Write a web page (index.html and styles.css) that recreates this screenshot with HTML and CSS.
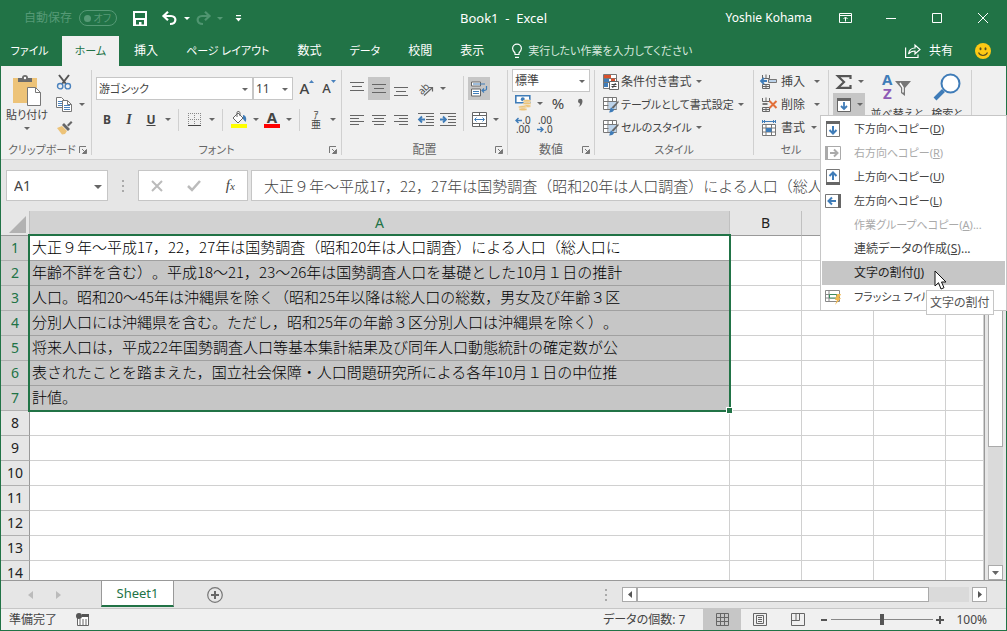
FILE: index.html
```html
<!DOCTYPE html>
<html lang="ja">
<head>
<meta charset="utf-8">
<title>Book1 - Excel</title>
<link rel="stylesheet" href="styles.css">
</head>
<body>
<svg class="defs" aria-hidden="true">
  <defs>
    <symbol id="i-launch" viewBox="0 0 9 9"><path d="M.5 7V.5H7" fill="none" stroke="#777"/><path d="M3 3l3 3M7.500 3.500v4h-4z" stroke="#777" fill="#777"/></symbol>
    <symbol id="i-grid" viewBox="0 0 16 16"><path d="M.5.5h13v12H.5zM.5 4.500h13M.5 8.500h13M5 .5v12M9.500.5v12" fill="#fff" stroke="#777"/><path d="M5.500 5h8v7h-8z" fill="#bcd3ea"/><path d="M15.500 3.500v2l-5 6-2-1z" fill="#666"/><path d="M8 10.500l3 2c0 2-2 3-5 3 1-1 .5-3 2-5z" fill="#3f7cb8"/></symbol>
    <symbol id="i-rows" viewBox="0 0 17 16"><path d="M1.500 1v3.500h7V1M5 .5v4M1.500 10.500h7v4h-7zM5 10.500v4M1.500 12.500h7" fill="none" stroke="#666"/></symbol>
  </defs>
</svg>
<div class="app">
  <header class="titlebar">
    <div class="quick">
      <span class="autosave" id="as">自動保存</span>
      <button class="toggle" aria-labelledby="as" disabled><i></i><span>オフ</span></button>
      <button class="tool save" aria-label="上書き保存"><svg width="14" height="15" viewBox="0 0 14 15"><path d="M0 0h14v15H0z" fill="#fff"/><path d="M2 2h10v5H2zM3 9h8v4.500H8.500V11H6v2.500H3z" fill="#217346"/></svg></button>
      <button class="tool undo" aria-label="元に戻す"><svg width="16" height="14" viewBox="0 0 16 14"><path d="M2 5h7c6 0 6 8-1 8" fill="none" stroke="#fff" stroke-width="2.200"/><path d="M6 .8L1.500 5 6 9.200" fill="none" stroke="#fff" stroke-width="2.200"/></svg></button>
      <i class="arrow light"></i>
      <button class="tool redo" aria-label="やり直し" disabled><svg width="16" height="14" viewBox="0 0 16 14"><path d="M14 5H7C1 5 1 13 8 13M10 .8L14.500 5 10 9.200" fill="none" stroke="#4f9570" stroke-width="2.200"/></svg></button>
      <i class="arrow faint"></i>
      <button class="tool custom" aria-label="クイック アクセス ツール バーのユーザー設定"><svg width="7" height="7" viewBox="0 0 7 7"><path d="M1 0h5v1.200H1zM.5 3h6L3.500 6.500z" fill="#fff"/></svg></button>
    </div>
    <h1>Book1&nbsp; -&nbsp; Excel</h1>
    <div class="window">
      <span class="user">Yoshie Kohama</span>
      <button class="win" aria-label="リボンの表示オプション"><svg width="13" height="10" viewBox="0 0 13 10"><path d="M.5.5h12v9H.5zM.5 2.500h12M6.500 8.500v-4M4.500 6l2-2 2 2" fill="none" stroke="#fff"/></svg></button>
      <button class="win" aria-label="最小化"><svg width="10" height="10"><path d="M0 5.500h10" stroke="#fff"/></svg></button>
      <button class="win" aria-label="最大化"><svg width="10" height="10"><path d="M.5.5h9v9h-9z" fill="none" stroke="#fff"/></svg></button>
      <button class="win" aria-label="閉じる"><svg width="10" height="10"><path d="M0 0l10 10M10 0L0 10" stroke="#fff"/></svg></button>
    </div>
  </header>

  <nav class="tabs">
    <button class="tab kana file">ファイル</button>
    <button class="tab kana active">ホーム</button>
    <button class="tab">挿入</button>
    <button class="tab kana">ページ レイアウト</button>
    <button class="tab">数式</button>
    <button class="tab kana">データ</button>
    <button class="tab">校閲</button>
    <button class="tab">表示</button>
    <button class="tell kana"><svg width="10" height="14" viewBox="0 0 10 14"><path d="M3 10.500V9C1.500 7.500.6 6.500.6 4.600a4.400 4.400 0 018.800 0C9.400 6.500 8.500 7.500 7 9v1.500zM3 13.300h4" fill="none" stroke="#fff" stroke-width="1.200"/></svg>実行したい作業を入力してください</button>
    <button class="share"><svg width="16" height="14" viewBox="0 0 16 14"><path d="M.6 3.500v10H13v-3M3.500 10C4 6.500 6.500 4 10 4V1l5 4.500-5 4.500V7C7 7 5 8 3.500 10z" fill="none" stroke="#fff" stroke-width="1.200"/></svg>共有</button>
    <button class="smile" aria-label="フィードバック"><svg width="16" height="16" viewBox="0 0 16 16"><circle cx="8" cy="8" r="8" fill="#fdc914"/><ellipse cx="5.500" cy="5.800" rx="1" ry="1.500" fill="#554c20"/><ellipse cx="10.500" cy="5.800" rx="1" ry="1.500" fill="#554c20"/><path d="M3.500 9.500c2 4 7 4 9 0" fill="none" stroke="#554c20" stroke-width="1.200"/></svg></button>
  </nav>

  <section class="ribbon">
    <div class="group g-clip">
      <div class="body">
        <button class="big paste"><svg width="28" height="31" viewBox="0 0 28 31"><path d="M0 3h24v25H0z" fill="#edc378"/><path d="M5 7V3h4a3 3 0 016 0h4v4z" fill="#6b6b6b"/><circle cx="12" cy="3" r="1.200" fill="#fff"/><path d="M14.500 12.500h8l5 5v13h-13z" fill="#fff" stroke="#777"/><path d="M22.500 12.500v5h5" fill="none" stroke="#777"/></svg><span class="kana">貼り付け</span><i class="arrow"></i></button>
        <div class="stack">
          <button class="tool" aria-label="切り取り"><svg width="16" height="16" viewBox="0 0 16 16"><path d="M3 1l7 9M13 1L6 10" stroke="#555" stroke-width="2"/><circle cx="4.200" cy="12.200" r="2.700" fill="none" stroke="#4a82bd" stroke-width="1.400"/><circle cx="11.800" cy="12.200" r="2.700" fill="none" stroke="#4a82bd" stroke-width="1.400"/></svg></button>
          <button class="tool copy" aria-label="コピー"><svg width="16" height="15" viewBox="0 0 16 15"><path d="M.5.5h5l3 3v7h-8z" fill="#fff" stroke="#777"/><path d="M2 4.500h4M2 6.500h4M2 8.500h4" stroke="#4a82bd"/><path d="M6.500 3.500h5l4 4v7h-9z" fill="#fff" stroke="#777"/><path d="M11.500 3.500v4h4" fill="none" stroke="#777"/><path d="M8 8.500h6M8 10.500h6M8 12.500h6" stroke="#4a82bd"/></svg><i class="arrow"></i></button>
          <button class="tool" aria-label="書式のコピー/貼り付け"><svg width="17" height="15" viewBox="0 0 17 15"><path d="M1 8l5-2 5 5-2 3-3 .5z" fill="#edc378"/><path d="M6 5l2-2 6 6-2 2zM11 5l4-4 1.500 1.500-4 4z" fill="#666"/></svg></button>
        </div>
      </div>
      <footer><span class="kana">クリップボード</span><button class="launch" aria-label="クリップボードの設定"><svg width="9" height="9"><use href="#i-launch"/></svg></button></footer>
    </div>

    <div class="group g-font">
      <div class="body col">
        <div class="row fields">
          <div class="combo family"><select class="kana" aria-label="フォント"><option>游ゴシック</option></select></div>
          <div class="combo size"><select aria-label="フォント サイズ"><option>11</option></select></div>
          <button class="tool grow" aria-label="フォント サイズの拡大"><b class="up">A</b><svg width="5" height="3"><path d="M0 3L2.500 0 5 3z" fill="#4a82bd"/></svg></button>
          <button class="tool shrink" aria-label="フォント サイズの縮小"><b>A</b><svg width="5" height="3"><path d="M0 0h5L2.500 3z" fill="#4a82bd"/></svg></button>
        </div>
        <div class="row">
          <button class="tool"><b>B</b></button><button class="tool"><b class="italic">I</b></button><button class="tool"><b class="under">U</b></button><i class="arrow"></i>
          <i class="sep"></i>
          <button class="tool" aria-label="罫線"><svg width="14" height="14" viewBox="0 0 14 14"><path d="M.5 0v12M6.500 0v12M12.500 0v12M0 .5h13M0 6.500h13" stroke="#888" stroke-dasharray="1 1"/><path d="M0 12.500h13" stroke="#444"/></svg></button><i class="arrow"></i>
          <i class="sep"></i>
          <button class="tool" aria-label="塗りつぶしの色"><svg width="17" height="17" viewBox="0 0 17 17"><path d="M7 2l5 5-5 5-5-5z" fill="#fff" stroke="#666"/><path d="M6 6V1.500C6 0 9 0 9 2v3" fill="none" stroke="#666"/><path d="M12 4c3 0 4 4 2.500 7L12 8z" fill="#3f7cb8"/><path d="M0 13h16v4H0z" fill="#ff0"/></svg></button><i class="arrow"></i>
          <button class="tool color" aria-label="フォントの色"><b>A</b><i></i></button><i class="arrow"></i>
          <i class="sep"></i>
          <button class="tool ruby" aria-label="ふりがなの表示/非表示"><span>ｱ</span><span>亜</span></button><i class="arrow"></i>
        </div>
      </div>
      <footer><span class="kana">フォント</span><button class="launch" aria-label="フォントの設定"><svg width="9" height="9"><use href="#i-launch"/></svg></button></footer>
    </div>

    <div class="group g-align">
      <div class="body">
        <div class="col block">
          <div class="row">
            <button class="tool top" aria-label="上揃え"><svg width="14" height="14"><path d="M0 .5h14M2 4.500h10M0 8.500h14" stroke="#666"/></svg></button><button class="tool on" aria-label="上下中央揃え"><svg width="14" height="14"><path d="M0 2.500h14M2 6.500h10M0 10.500h14" stroke="#666"/></svg></button><button class="tool" aria-label="下揃え"><svg width="14" height="14"><path d="M0 5.500h14M2 9.500h10M0 13.500h14" stroke="#666"/></svg></button>
            <button class="tool gap" aria-label="方向"><svg width="18" height="16" viewBox="0 0 18 16"><text class="ab" x="1" y="11" transform="rotate(-45 7 8)">ab</text><path d="M7 14.500L15 7M11.500 6.500h4v4" fill="none" stroke="#666" stroke-width="1.200"/></svg></button><i class="arrow"></i>
          </div>
          <div class="row">
            <button class="tool" aria-label="左揃え"><svg width="14" height="12"><path d="M0 1.500h14M0 4.500h9M0 7.500h14M0 10.500h9" stroke="#666"/></svg></button><button class="tool" aria-label="中央揃え"><svg width="14" height="12"><path d="M0 1.500h14M2 4.500h10M0 7.500h14M2 10.500h10" stroke="#666"/></svg></button><button class="tool" aria-label="右揃え"><svg width="14" height="12"><path d="M0 1.500h14M5 4.500h9M0 7.500h14M5 10.500h9" stroke="#666"/></svg></button>
            <button class="tool gap" aria-label="インデントを減らす"><svg width="16" height="14"><path d="M0 .5h16M8 3.500h8M8 6.500h8M8 9.500h8M0 12.500h16" stroke="#666"/><path d="M1 6.500h6M4 3.500l-3 3 3 3" fill="none" stroke="#3f7cb8" stroke-width="1.800"/></svg></button><button class="tool" aria-label="インデントを増やす"><svg width="16" height="14"><path d="M0 .5h16M8 3.500h8M8 6.500h8M8 9.500h8M0 12.500h16" stroke="#666"/><path d="M0 6.500h6M3 3.500l3 3-3 3" fill="none" stroke="#3f7cb8" stroke-width="1.800"/></svg></button>
          </div>
        </div>
        <i class="sep tall"></i>
        <div class="col">
          <div class="row"><button class="tool on" aria-label="折り返して全体を表示する"><svg width="16" height="16" viewBox="0 0 16 16"><path d="M.5 1h9v4h-9zM.5 8h9v7h-9z" fill="#fff" stroke="#666"/><path d="M2 3h12M2 10.500h6M2 12.500h6M15.500 5v3c0 1-1 1.500-4 1.500M13 7.500l-2 2 2 2" fill="none" stroke="#3f7cb8" stroke-width="1.200"/></svg></button></div>
          <div class="row"><button class="tool" aria-label="セルを結合して中央揃え"><svg width="15" height="15" viewBox="0 0 15 15"><path d="M.5.5h14v14H.5zM.5 3.500h14M.5 11.500h14M7.500.5v3M7.500 11.500v3" fill="#fff" stroke="#666"/><path d="M3 7.500h9M4.500 5.500l-2 2 2 2M10.500 5.500l2 2-2 2" fill="none" stroke="#3f7cb8"/></svg></button><i class="arrow"></i></div>
        </div>
      </div>
      <footer><span>配置</span><button class="launch" aria-label="配置の設定"><svg width="9" height="9"><use href="#i-launch"/></svg></button></footer>
    </div>

    <div class="group g-num">
      <div class="body col tight">
        <div class="combo"><select aria-label="数値の書式"><option>標準</option></select></div>
        <div class="row">
          <button class="tool" aria-label="通貨表示形式"><svg width="17" height="16" viewBox="0 0 17 16"><path d="M.8.800h14v7H.8z" fill="#fff" stroke="#3f7cb8" stroke-width="1.600"/><circle cx="7.800" cy="4.300" r="2" fill="#3f7cb8"/><g fill="#edc378" stroke="#f0f0f0" stroke-width=".5"><ellipse cx="12" cy="6" rx="4" ry="1.500"/><ellipse cx="12" cy="8.500" rx="4" ry="1.500"/><ellipse cx="12" cy="11" rx="4" ry="1.500"/><ellipse cx="7.500" cy="12" rx="4" ry="1.500"/><ellipse cx="8" cy="14.300" rx="4" ry="1.500"/></g></svg></button><i class="arrow"></i>
          <button class="tool pct">%</button><button class="tool comma" aria-label="桁区切りスタイル"><svg width="5" height="8"><path d="M0 2a2 2 0 014.500 0c0 3-1.500 5-4 6 1-1 1.500-2 1.500-3.500C1 4.500 0 3.500 0 2z" fill="#666"/></svg></button>
        </div>
        <div class="row">
          <button class="tool dec" aria-label="小数点以下の表示桁数を増やす"><span><svg width="7" height="7"><path d="M7 3.500H1M3.500 1L1 3.500 3.500 6" fill="none" stroke="#3f7cb8" stroke-width="1.400"/></svg>.0</span><span>.00</span></button>
          <button class="tool dec" aria-label="小数点以下の表示桁数を減らす"><span>.00</span><span><svg width="7" height="7"><path d="M0 3.500h6M3.500 1L6 3.500 3.500 6" fill="none" stroke="#3f7cb8" stroke-width="1.400"/></svg>.0</span></button>
        </div>
      </div>
      <footer><span>数値</span><button class="launch" aria-label="数値の設定"><svg width="9" height="9"><use href="#i-launch"/></svg></button></footer>
    </div>

    <div class="group g-style">
      <div class="body col list">
        <button class="item"><svg width="16" height="16" viewBox="0 0 16 16"><path d="M.5.5h13v14H.5zM.5 4.500h13M.5 8.500h13" fill="#fff" stroke="#777"/><path d="M1 1h7v3H1zM8 4.500h4v3H8z" fill="#d9512c"/><path d="M1 5h5v3H1zM1 9h4v4H1z" fill="#3f7cb8"/><path d="M6.500 7.500h9v8h-9z" fill="#fff" stroke="#666"/><path d="M8.500 10.500h5M8.500 12.500h5M12.500 9l-3 5" stroke="#444"/></svg>条件付き書式<i class="arrow"></i></button>
        <button class="item kana"><svg width="16" height="16"><use href="#i-grid"/></svg>テーブルとして書式設定<i class="arrow"></i></button>
        <button class="item kana"><svg width="16" height="16"><use href="#i-grid"/></svg>セルのスタイル<i class="arrow"></i></button>
      </div>
      <footer><span class="kana">スタイル</span></footer>
    </div>

    <div class="group g-cell">
      <div class="body col list">
        <button class="item"><svg width="17" height="16" viewBox="0 0 17 16"><use href="#i-rows"/><path d="M7.500 5.500h8v3h-8z" fill="#bcd3ea" stroke="#777"/><path d="M0 7h6M3 4L0 7l3 3" fill="none" stroke="#3f7cb8" stroke-width="1.800"/></svg>挿入<i class="arrow"></i></button>
        <button class="item"><svg width="17" height="16" viewBox="0 0 17 16"><use href="#i-rows"/><path d="M1.500 7h5" stroke="#777" stroke-width="2"/><path d="M8.500 4l7 7M15.500 4l-7 7" stroke="#e2703a" stroke-width="2"/></svg>削除<i class="arrow"></i></button>
        <button class="item short"><svg width="17" height="16" viewBox="0 0 17 16"><path d="M1.500 4.500h13v11h-13zM1.500 8h13M1.500 12h13M5 4.500v11M10.500 4.500v11" fill="#fff" stroke="#777"/><path d="M5 8h5.500v4H5z" fill="#3f7cb8"/><path d="M2 1.500h12M1.500 0v3M14.500 0v3M4 0L2.500 1.500 4 3M12 0l1.500 1.500L12 3" fill="none" stroke="#3f7cb8"/></svg>書式<i class="arrow"></i></button>
      </div>
      <footer><span class="kana">セル</span></footer>
    </div>

    <div class="group g-edit">
      <div class="body">
        <div class="col list narrow">
          <button class="item sum" aria-label="オート SUM"><svg width="16" height="14" viewBox="0 0 16 14"><path d="M14.500 4V1.200H2L8 7l-6 5.800h12.500V10" fill="none" stroke="#555" stroke-width="2.200"/></svg><i class="arrow"></i></button>
          <div class="fill">
            <button class="item on" aria-label="フィル" aria-expanded="true"><svg width="14" height="14"><path d="M.5.5h13v13H.5z" fill="#fff" stroke="#666"/><path d="M0 0h14v3H0z" fill="#666"/><path d="M7 4v7M4 8l3 3 3-3" fill="none" stroke="#3f7cb8" stroke-width="1.800"/></svg><i class="arrow"></i></button>
            <div class="menu" role="menu">
              <button class="kana" role="menuitem"><svg width="14" height="16" viewBox="0 0 14 16"><path d="M.5.5h13v15H.5z" fill="#fff" stroke="#777"/><path d="M0 0h14v3H0z" fill="#666"/><path d="M7 5v8M3.500 9L7 12.500 10.500 9" fill="none" stroke="#3f7cb8" stroke-width="2"/></svg><span>下方向へコピー(<u>D</u>)</span></button>
              <button class="kana" role="menuitem" disabled><svg width="16" height="14" viewBox="0 0 16 14"><path d="M.5.5h15v13H.5z" fill="#fff" stroke="#aaa"/><path d="M0 0h3v14H0z" fill="#aaa"/><path d="M5 7h8M9 3.500L12.500 7 9 10.500" fill="none" stroke="#aaa" stroke-width="2"/></svg><span>右方向へコピー(<u>R</u>)</span></button>
              <button class="kana" role="menuitem"><svg width="14" height="16" viewBox="0 0 14 16"><path d="M.5.5h13v15H.5z" fill="#fff" stroke="#777"/><path d="M0 13h14v3H0z" fill="#666"/><path d="M7 11V3M3.500 7L7 3.500 10.500 7" fill="none" stroke="#3f7cb8" stroke-width="2"/></svg><span>上方向へコピー(<u>U</u>)</span></button>
              <button class="kana" role="menuitem"><svg width="16" height="14" viewBox="0 0 16 14"><path d="M.5.5h15v13H.5z" fill="#fff" stroke="#777"/><path d="M13 0h3v14h-3z" fill="#666"/><path d="M11 7H3M7 3.500L3.500 7 7 10.500" fill="none" stroke="#3f7cb8" stroke-width="2"/></svg><span>左方向へコピー(<u>L</u>)</span></button>
              <button class="kana" role="menuitem" disabled><span>作業グループへコピー(<u>A</u>)...</span></button>
              <button role="menuitem"><span>連続データの作成(<u>S</u>)...</span></button>
              <button role="menuitem" class="hot"><span>文字の割付(<u>J</u>)</span></button>
              <button class="kana" role="menuitem"><svg width="16" height="16" viewBox="0 0 16 16"><path d="M.5 1.500h14v11H.5zM.5 5.500h14M.5 9h14M4 1.500v11" fill="#fff" stroke="#888"/><path d="M4.500 5.500h7V9h-7z" fill="#fff" stroke="#3a8a5c"/><path d="M12 5h4l-2 4h2l-6 7 2-5h-2z" fill="#f0b850"/></svg><span>フラッシュ フィル(<u>F</u>)</span></button>
              <div class="tooltip" role="tooltip">文字の割付</div>
              <svg class="pointer" width="14" height="20" viewBox="0 0 14 20"><path d="M1 1v15l3.500-3.300L7 19l3-1.300L7.500 12H12z" fill="#fff" stroke="#111"/></svg>
            </div>
          </div>
        </div>
        <button class="big sort"><svg width="30" height="28" viewBox="0 0 30 28"><text class="az blue" x="0" y="12">A</text><text class="az violet" x="1" y="26">Z</text><path d="M13 8h16l-6 7v8l-4-3v-5z" fill="#777"/><path d="M18 10l3 4.500v5" fill="none" stroke="#fff" stroke-width="1.500"/></svg><span class="kana">並べ替えと</span></button>
        <button class="big find"><svg width="28" height="28" viewBox="0 0 28 28"><circle cx="17.500" cy="10.500" r="9" fill="#fff" stroke="#3f7cb8" stroke-width="2"/><path d="M10.500 17.500L2 26" stroke="#3f7cb8" stroke-width="4"/></svg><span class="kana">検索と</span></button>
      </div>
    </div>
  </section>

  <section class="formula">
    <div class="name combo"><input aria-label="名前ボックス" value="A1"></div>
    <i class="dots"></i>
    <div class="fx">
      <button aria-label="キャンセル" disabled><svg width="12" height="12"><path d="M1 1l10 10M11 1L1 11" stroke="#bbb" stroke-width="2"/></svg></button>
      <button aria-label="入力" disabled><svg width="14" height="12"><path d="M1 6l4 4 8-9" fill="none" stroke="#bbb" stroke-width="2.500"/></svg></button>
      <button aria-label="関数の挿入"><span class="f">f<small>x</small></span></button>
    </div>
    <input class="content" aria-label="数式バー" value="大正９年～平成17，22，27年は国勢調査（昭和20年は人口調査）による人口（総人口に">
  </section>

  <main class="sheet">
    <div class="cells">
      <table>
        <colgroup><col class="c-head"><col class="c-a"><col class="c-n"><col class="c-n"><col class="c-n"><col></colgroup>
        <thead><tr><th class="corner" aria-label="すべて選択"><svg width="17" height="17"><path d="M17 0v17H0z" fill="#b2b2b2"/></svg></th><th class="sel">A</th><th>B</th><th>C</th><th>D</th><th>E</th></tr></thead>
        <tbody>
          <tr class="sel first"><th>1</th><td>大正９年～平成17，22，27年は国勢調査（昭和20年は人口調査）による人口（総人口に<i class="range"></i></td><td></td><td></td><td></td><td></td></tr>
          <tr class="sel"><th>2</th><td>年齢不詳を含む）。平成18～21，23～26年は国勢調査人口を基礎とした10月１日の推計</td><td></td><td></td><td></td><td></td></tr>
          <tr class="sel"><th>3</th><td>人口。昭和20～45年は沖縄県を除く（昭和25年以降は総人口の総数，男女及び年齢３区</td><td></td><td></td><td></td><td></td></tr>
          <tr class="sel"><th>4</th><td>分別人口には沖縄県を含む。ただし，昭和25年の年齢３区分別人口は沖縄県を除く）。</td><td></td><td></td><td></td><td></td></tr>
          <tr class="sel"><th>5</th><td>将来人口は，平成22年国勢調査人口等基本集計結果及び同年人口動態統計の確定数が公</td><td></td><td></td><td></td><td></td></tr>
          <tr class="sel"><th>6</th><td>表されたことを踏まえた，国立社会保障・人口問題研究所による各年10月１日の中位推</td><td></td><td></td><td></td><td></td></tr>
          <tr class="sel"><th>7</th><td>計値。</td><td></td><td></td><td></td><td></td></tr>
          <tr><th>8</th><td></td><td></td><td></td><td></td><td></td></tr>
          <tr><th>9</th><td></td><td></td><td></td><td></td><td></td></tr>
          <tr><th>10</th><td></td><td></td><td></td><td></td><td></td></tr>
          <tr><th>11</th><td></td><td></td><td></td><td></td><td></td></tr>
          <tr><th>12</th><td></td><td></td><td></td><td></td><td></td></tr>
          <tr><th>13</th><td></td><td></td><td></td><td></td><td></td></tr>
          <tr><th>14</th><td></td><td></td><td></td><td></td><td></td></tr>
        </tbody>
      </table>
    </div>
    <div class="vscroll">
      <button aria-label="上へ"><svg width="7" height="4"><path d="M0 4l3.500-4L7 4z" fill="#777"/></svg></button>
      <div class="track"><i></i></div>
      <button aria-label="下へ"><svg width="7" height="4"><path d="M0 0h7L3.500 4z" fill="#666"/></svg></button>
    </div>
  </main>

  <div class="sheetbar">
    <div class="navs"><button aria-label="前のシート" disabled><svg width="5" height="8"><path d="M5 0v8L0 4z" fill="#bbb"/></svg></button><button aria-label="次のシート" disabled><svg width="5" height="8"><path d="M0 0v8l5-4z" fill="#bbb"/></svg></button></div>
    <button class="sheettab">Sheet1</button>
    <button class="add" aria-label="新しいシート"><svg width="16" height="16"><circle cx="8" cy="8" r="7.300" fill="none" stroke="#777" stroke-width="1.200"/><path d="M8 4v8M4 8h8" stroke="#666" stroke-width="2"/></svg></button>
    <i class="dots"></i>
    <div class="hscroll">
      <button aria-label="左へ"><svg width="4" height="7"><path d="M4 0v7L0 3.500z" fill="#555"/></svg></button>
      <div class="track"><i></i></div>
      <button aria-label="右へ"><svg width="4" height="7"><path d="M0 0v7l4-3.500z" fill="#555"/></svg></button>
    </div>
  </div>

  <footer class="status">
    <span>準備完了</span>
    <button class="macro" aria-label="マクロの記録"><svg width="14" height="13" viewBox="0 0 14 13"><path d="M1.500 5v7.500h11V1.500H6" fill="#fff" stroke="#666"/><path d="M6 1h7v3H6z" fill="#555"/><circle cx="3" cy="3" r="3" fill="#555"/><path d="M3 7h9M3 9h9M3 11h9" stroke="#666" stroke-dasharray="2 1"/></svg></button>
    <span class="count">データの個数: 7</span>
    <button class="view on" aria-label="標準"><svg width="13" height="13"><path d="M.5.5h12v12H.5zM.5 4.500h12M.5 8.500h12M4.500.5v12M8.500.5v12" fill="none" stroke="#666"/></svg></button>
    <button class="view" aria-label="ページ レイアウト"><svg width="14" height="13"><path d="M.5.5h13v12H.5zM3.500 2.500h7v8h-7zM5 4.500h4M5 6.500h4M5 8.500h4" fill="none" stroke="#666"/></svg></button>
    <button class="view" aria-label="改ページ プレビュー"><svg width="14" height="13"><path d="M.5.500h13v12H.5zM.5 7.500h8v-7M5 .5v7" fill="none" stroke="#666"/></svg></button>
    <button class="zoom" aria-label="縮小"><svg width="6" height="8"><path d="M0 4h6" stroke="#555" stroke-width="2"/></svg></button>
    <input class="slider" type="range" min="0" max="100" value="50" aria-label="ズーム">
    <button class="zoom" aria-label="拡大"><svg width="8" height="8"><path d="M0 4h8M4 0v8" stroke="#555" stroke-width="2"/></svg></button>
    <span class="percent">100%</span>
  </footer>
</div>
</body>
</html>
```
FILE: styles.css
```css
:root {
  --green: #217346;
  --ink: #444;
  --line: #c6c6c6;
  --pane: #f0f0f0;
  --shade: #e6e6e6;
}
*, *::before, *::after { box-sizing: border-box; }
body {
  margin: 0;
  font: 12px/16px "Noto Sans", "Noto Sans CJK JP", sans-serif;
  font-feature-settings: "palt";
  color: var(--ink);
}
button, input, select { font: inherit; font-feature-settings: inherit; color: inherit; border: 0; margin: 0; padding: 0; background: none; }
button { display: flex; align-items: center; justify-content: center; white-space: nowrap; }
svg { display: block; flex: none; overflow: visible; }
.kana { font-size: 11px; }
.defs { position: absolute; width: 0; height: 0; }
.app { display: flex; flex-direction: column; height: 100vh; border: 1px solid var(--green); border-top: 0; background: var(--shade); }

/* title bar */
.titlebar { display: grid; grid-template-columns: 1fr auto 1fr; align-items: center; height: 36px; background: var(--green); color: #fff; flex: none; }
.titlebar h1 { margin: 0; font-size: 13px; font-weight: 400; }
.quick { display: flex; align-items: center; padding-left: 23px; }
.autosave, .toggle { color: #569a76; }
.toggle { width: 38px; height: 16px; margin-left: 7px; border: 1px solid #569a76; border-radius: 8px; justify-content: space-between; padding: 0 5px 0 4px; font-size: 10px; }
.toggle i { width: 7px; height: 7px; border-radius: 50%; background: #569a76; }
.quick .save { margin: 0 8px 0 12px; }
.quick .custom { margin-left: 2px; }
.window { display: flex; align-items: center; justify-content: flex-end; }
.user { margin-right: 10px; }
.win { width: 46px; height: 32px; }

.arrow { flex: none; width: 11px; height: 3px; display: flex; justify-content: center; }
.arrow::after { content: ""; width: 0; border: 3px solid transparent; border-top-color: #666; border-bottom: 0; }
.arrow.light::after { border-top-color: #fff; }
.arrow.faint::after { border-top-color: #569a76; }
.tool { width: 22px; height: 23px; flex: none; }
.on { background: #c6c6c6; }

/* tabs */
.tabs { display: flex; height: 30px; background: var(--green); color: #fff; flex: none; }
.tab { padding: 0 14px; }
.tab.file { width: 61px; padding: 0 4px 0 0; }
.tab.active { width: 57px; padding: 0; margin-right: 1px; background: var(--pane); color: var(--green); }
.tell { gap: 6px; margin-left: 14px; color: #d8e8df; }
.share { gap: 8px; margin-left: auto; }
.smile { padding: 0 15px 0 22px; }

/* ribbon */
.ribbon { display: flex; height: 94px; padding: 4px 0; background: var(--pane); border-bottom: 1px solid #d0d0d0; flex: none; }
.group { display: flex; flex-direction: column; border-right: 1px solid #d0d0d0; }
.body { display: flex; flex: 1; min-height: 0; }
.body.col, .col { display: flex; flex-direction: column; }
.row { display: flex; align-items: center; }
.group footer { display: flex; align-items: center; height: 10px; color: #666; }
.group footer span { flex: 1; text-align: center; }
.group footer .launch { width: 15px; height: 10px; margin-left: -15px; }
.sep { width: 1px; height: 22px; margin: 0 5px; background: #d0d0d0; }
.sep.tall { height: 55px; margin: 6px 4px 0 0; }
.big { flex-direction: column; }
.g-clip { width: 91px; }
.g-clip footer span { text-align: left; padding-left: 7px; }
.g-font { width: 250px; }
.g-align { width: 166px; }
.g-num { width: 87px; }
.g-style { width: 159px; }
.g-cell { width: 75px; }
.g-edit { width: 143px; }

.paste { width: 52px; height: 64px; padding-top: 1px; }
.paste span { line-height: 18px; }
.paste .arrow { margin-top: 3px; }
.stack .copy { width: 34px; justify-content: space-between; padding-left: 3px; }

.combo { position: relative; display: flex; background: #fff; border: 1px solid var(--line); }
.combo::after { content: ""; position: absolute; right: 4px; top: calc(50% - 1px); border: 3px solid transparent; border-top-color: #666; border-bottom: 0; pointer-events: none; }
.combo select { appearance: none; width: 100%; height: 21px; padding-left: 2px; }
.g-font .body { padding: 7px 0 0 4px; gap: 8px; }
.family { width: 157px; }
.size { width: 40px; }
.grow, .shrink { align-items: flex-start; padding-top: 3px; }
.grow { margin-left: 3px; }
.grow b { font-size: 15px; font-weight: 500; }
.shrink b { font-size: 13px; font-weight: 500; }
.italic { font-style: italic; font-family: "Liberation Serif", serif; font-size: 14px; }
.under { text-decoration: underline; }
.color { flex-direction: column; }
.color b { font-size: 15px; line-height: 13px; }
.color i { width: 16px; height: 4px; background: #f00; }
.ruby { flex-direction: column; font-size: 10px; line-height: 9px; }

.g-align .body { padding-left: 4px; }
.g-align .col { padding-top: 7px; gap: 8px; }
.block { width: 117px; }
.gap { margin-left: 3px; }
.ab { font: 10px "Noto Sans", sans-serif; fill: #555; }

.g-num .body { padding: 0 4px; margin-top: -1px; }
.g-num .row { height: 22px; }
.pct { width: 26px; font-size: 15px; }
.comma { width: 18px; }
.dec { flex-direction: column; font-size: 10px; line-height: 9px; }
.dec span { display: flex; align-items: center; }

.item { gap: 3px; height: 23px; justify-content: flex-start; }
.list .item { padding-left: 7px; }
.g-style .item { gap: 2px; padding-left: 8px; }
.g-cell .item { width: 68px; }
.g-cell .item.short { width: 64px; }
.g-cell .item .arrow { margin-left: auto; }
.narrow { width: 40px; }
.narrow .sum { width: 36px; }
.fill { position: relative; width: 32px; margin-left: 4px; }
.fill .item { width: 32px; padding-left: 4px; }
.sort { width: 56px; height: 54px; }
.find { width: 44px; height: 54px; }
.big.sort, .big.find { gap: 5px; justify-content: flex-start; padding-top: 3px; }
.az { font: 700 15px "Noto Sans", sans-serif; }
.blue { fill: #3f7cb8; }
.violet { fill: #8e5bb5; }

/* fill menu */
.menu { position: absolute; z-index: 5; top: calc(100% - 1px); left: -13px; width: 187px; padding: 1px; background: #fff; border: 1px solid var(--line); }
.menu button { display: grid; grid-template-columns: 22px 1fr; column-gap: 10px; justify-items: start; width: 100%; height: 24px; text-align: left; }
.menu button svg { justify-self: center; }
.menu button span { grid-column: 2; }
.menu button:disabled { color: #aaa; }
.menu .hot { background: var(--line); color: #222; }
.tooltip { position: absolute; left: 105px; top: 174px; padding: 4px 3px 3px; background: #fff; border: 1px solid var(--line); color: #555; white-space: nowrap; }
.pointer { position: absolute; left: 113px; top: 154px; }

/* formula bar */
.formula { display: flex; align-items: center; height: 51px; padding-left: 5px; flex: none; }
.formula .name { width: 102px; height: 31px; }
.name input { width: 80px; padding-left: 7px; font-size: 14px; }
.formula .name::after { right: 5px; border-width: 4px; border-bottom: 0; }
.dots { width: 2px; height: 12px; background: repeating-linear-gradient(#aaa 0 2px, transparent 2px 5px); }
.formula .dots { margin: 0 14px; }
.fx { display: flex; justify-content: space-around; width: 110px; height: 31px; background: #fff; border: 1px solid var(--line); }
.f { font: italic 15px "Liberation Serif", serif; }
.f small { font-size: 11px; }
.content { flex: 1; min-width: 0; height: 31px; margin-left: 3px; padding: 0 12px; background: #fff; border: 1px solid var(--line); font: 300 15px "Noto Sans CJK JP", sans-serif; font-feature-settings: normal; text-spacing-trim: space-all; }

/* worksheet */
.sheet { display: flex; flex: 1; min-height: 0; }
.cells { flex: 1; overflow: hidden; background: #fff; border-right: 1px solid #999; }
table { width: 100%; table-layout: fixed; border-collapse: separate; border-spacing: 0; }
.c-head { width: 29px; }
.c-a { width: 700px; }
.c-n { width: 72px; }
tr { height: 25px; }
th, td { height: 25px; padding: 0; border: 1px solid #d0d0d0; border-width: 0 1px 1px 0; white-space: nowrap; line-height: 24px; }
th { background: var(--shade); font-size: 14px; font-weight: 400; color: #222; border-color: #b0b0b0; }
thead th { border-bottom-color: #999; border-right-color: #c0c0c0; }
tbody th { border-right-color: #999; }
.corner svg { margin: 2px 0 0 8px; }
th.sel, tr.sel th { background: #d2d2d2; color: var(--green); }
td { position: relative; padding: 0 0 2px 2px; font: 300 15px/22px "Noto Sans CJK JP", sans-serif; font-feature-settings: normal; text-spacing-trim: space-all; color: #000; }
tr.sel td:nth-child(2) { background: #c6c6c6; border-bottom-color: #a0a0a0; }
tr.sel.first td:nth-child(2) { background: #fff; }
.range { position: absolute; z-index: 2; left: -2px; top: -2px; right: -2px; height: 178px; border: 2px solid var(--green); }
.range::after { content: ""; position: absolute; right: -4px; bottom: -4px; width: 7px; height: 7px; background: var(--green); border: 1px solid #fff; }

.vscroll { display: flex; flex-direction: column; width: 21px; padding: 2px 3px 0; }
.vscroll button, .hscroll button { width: 15px; height: 15px; background: #fff; border: 1px solid #aaa; flex: none; }
.track { background: #dadada; flex: 1; }
.track i { display: block; background: #fff; border: 1px solid #aaa; }
.vscroll .track i { height: 65%; }

/* sheet tabs */
.sheetbar { display: flex; align-items: center; height: 28px; border-top: 1px solid #999; flex: none; }
.navs { display: flex; width: 100px; padding-left: 15px; }
.navs button { width: 28px; height: 20px; }
.sheettab { width: 73px; height: 26px; margin-top: -2px; background: #fff; border: 1px solid #999; border-width: 0 1px; border-bottom: 2px solid var(--green); color: var(--green); font-size: 13px; }
.add { margin-left: 33px; }
.sheetbar .dots { margin-left: auto; }
.hscroll { display: flex; width: 365px; margin: 0 19px 0 15px; }
.hscroll .track { margin-right: 3px; }
.hscroll .track i { width: 88%; height: 15px; }

/* status bar */
.status { display: flex; align-items: center; height: 22px; padding: 0 19px 0 8px; background: var(--pane); border-top: 1px solid var(--line); flex: none; }
.macro { margin-left: 19px; }
.count { margin: 0 18px 0 auto; }
.view { width: 38px; height: 21px; }
.zoom { width: 14px; height: 16px; }
.slider { appearance: none; width: 102px; height: 12px; background: linear-gradient(#888, #888) center / 100% 1px no-repeat; }
.slider::-webkit-slider-thumb { appearance: none; width: 4px; height: 11px; background: #555; }
.percent { margin-left: 9px; }
```
